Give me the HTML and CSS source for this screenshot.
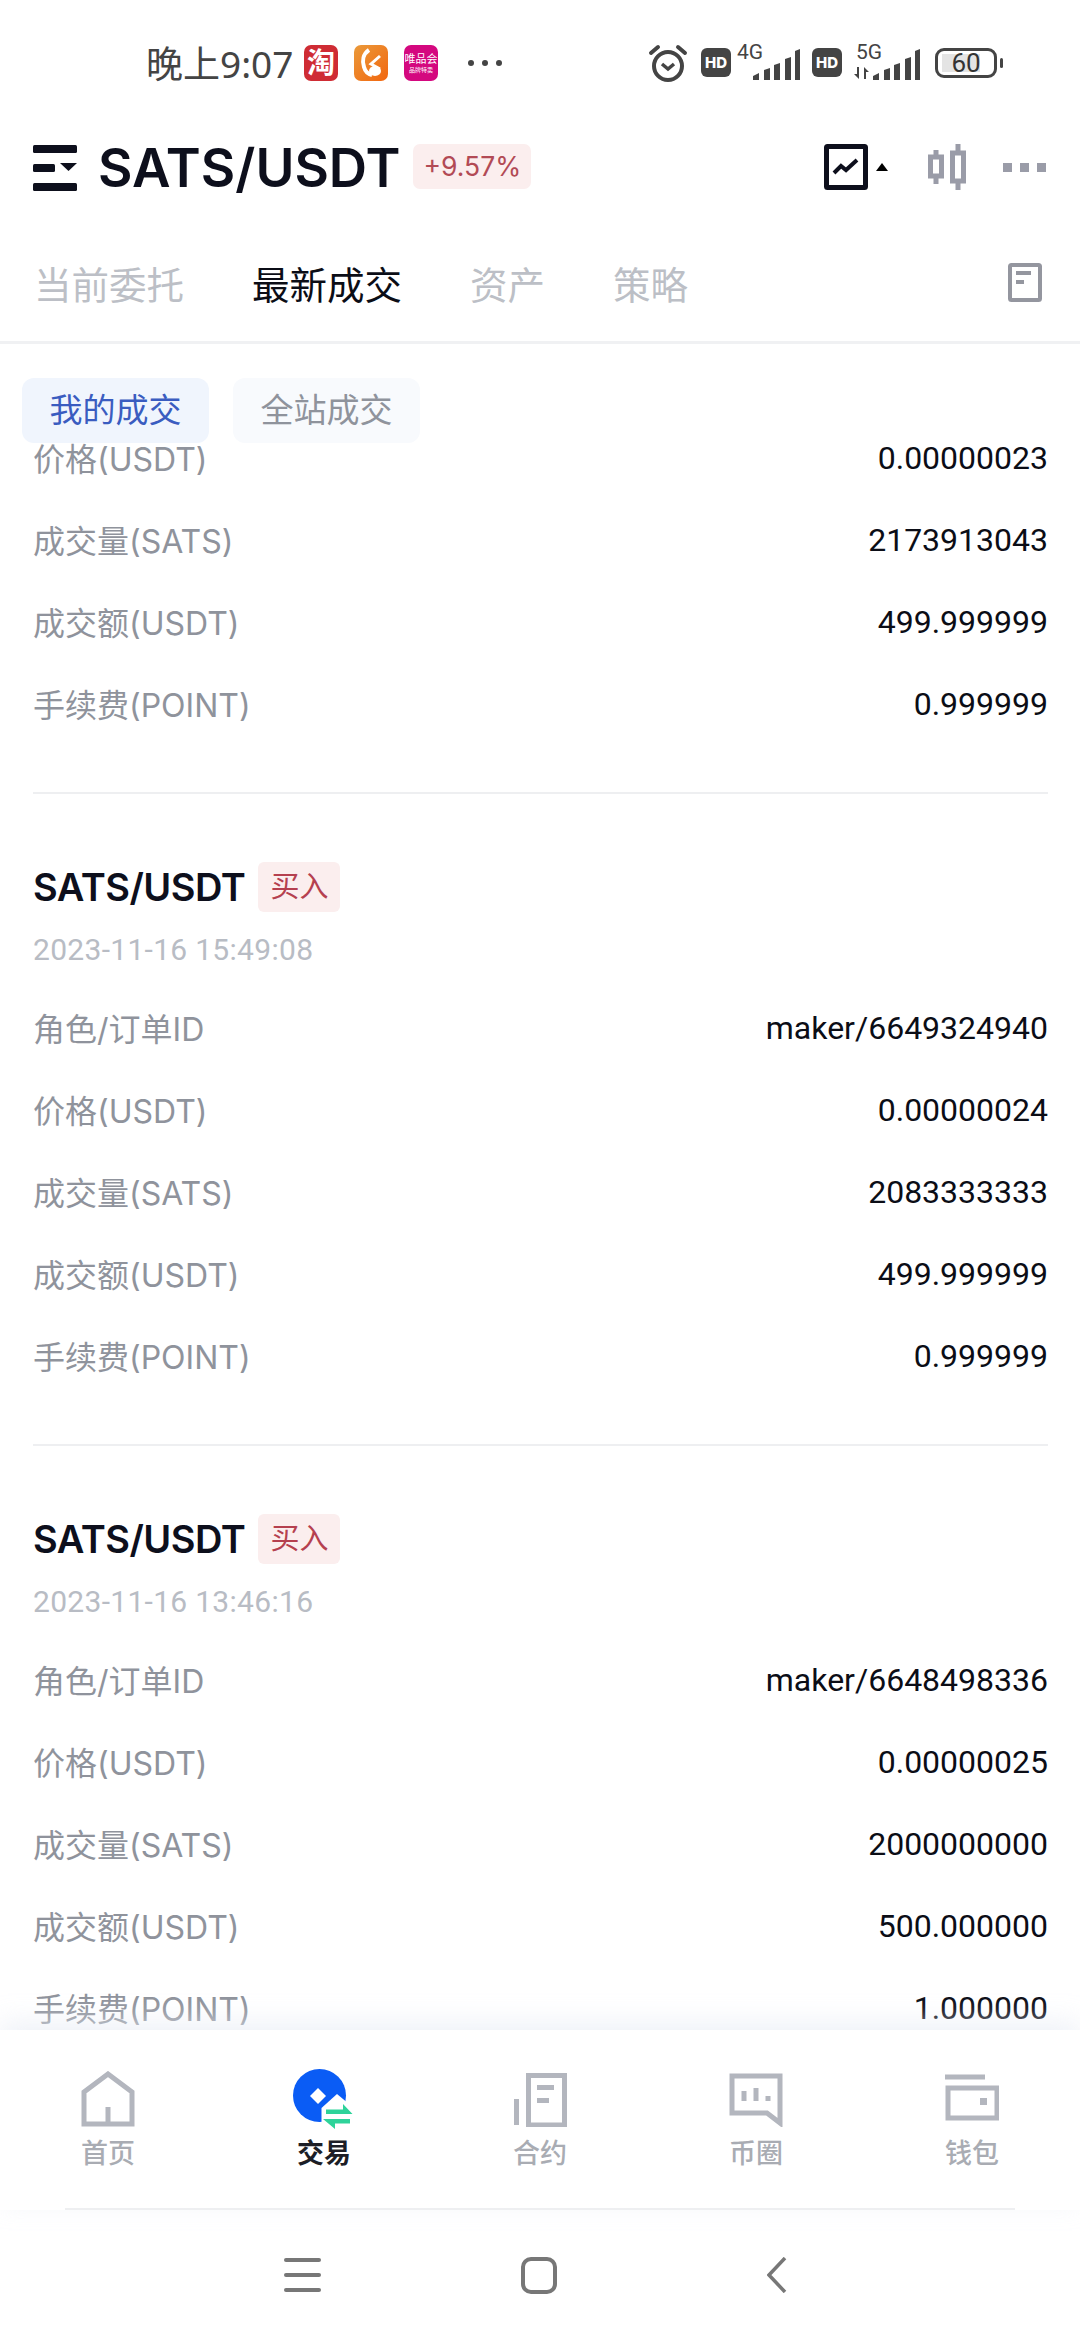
FILE: index.html
```html
<!DOCTYPE html>
<html lang="zh">
<head>
    <meta charset="UTF-8">
    <meta name="viewport" content="width=device-width, initial-scale=1.0">
    <title>SATS/USDT</title>
    <link rel="stylesheet" href="styles.css">
</head>
<body>
<div class="app">
    <!-- barra de estado -->
    <div class="status-bar">
        <div class="status-left">
            <span class="clock">晚上9:07</span>
            <span class="app-icon taobao">淘</span>
            <span class="app-icon squirrel">
                <svg viewBox="0 0 34 36" width="34" height="36"><path d="M15 5C9 9 8 16 10 22c1 4 4 7 8 8" fill="none" stroke="#fff" stroke-width="4"/><path d="M26 11l-9 8 9 5" fill="none" stroke="#fff" stroke-width="3"/><ellipse cx="21" cy="26" rx="6" ry="5" fill="#fff"/></svg>
            </span>
            <span class="app-icon vip"><b>唯品会</b><i>品牌特卖</i></span>
            <span class="status-dots"><i></i><i></i><i></i></span>
        </div>
        <div class="status-right">
            <svg class="alarm" viewBox="0 0 40 38" width="40" height="38">
                <circle cx="20" cy="22" r="14" fill="none" stroke="#444" stroke-width="4"/>
                <path d="M14 20l6 5 6-5" fill="none" stroke="#444" stroke-width="3.5"/>
                <path d="M3 9l7-6 M37 9l-7-6" fill="none" stroke="#444" stroke-width="4" stroke-linecap="round"/>
            </svg>
            <span class="hd">HD</span>
            <span class="net">
                <span class="net-label">4G</span>
                <svg viewBox="0 0 48 32" width="48" height="32"><path d="M1 32v-4l6-3v7z M12 32v-10l6-2v12z M22 32v-15l6-2v17z M33 32v-21l6-2v23z M43 32V3l5-2v31z" fill="#444"/></svg>
            </span>
            <span class="hd hd-second">HD</span>
            <span class="net net-5g">
                <span class="net-label">5G</span>
                <svg class="net-arrows" viewBox="0 0 16 12" width="16" height="12"><path d="M5 0v12L0 7h3V0z M10 12V0l5 5h-3v7z" fill="#444"/></svg>
                <svg viewBox="0 0 48 32" width="48" height="32"><path d="M1 32v-4l6-3v7z M12 32v-10l6-2v12z M22 32v-15l6-2v17z M33 32v-21l6-2v23z M43 32V3l5-2v31z" fill="#444"/></svg>
            </span>
            <span class="battery"><span class="battery-fill"></span><span class="battery-num">60</span></span>
            <span class="battery-nub"></span>
        </div>
    </div>

    <!-- cabecera -->
    <header class="top-bar">
        <svg class="menu-icon" viewBox="0 0 44 46" width="44" height="46">
            <rect width="44" height="8" rx="1.5" fill="#0d0f1c"/>
            <rect y="19" width="22" height="8" rx="1.5" fill="#0d0f1c"/>
            <path d="M27 18h17l-8.5 8z" fill="#0d0f1c"/>
            <rect y="38" width="44" height="8" rx="1.5" fill="#0d0f1c"/>
        </svg>
        <span class="pair">SATS/USDT</span>
        <span class="change">+9.57%</span>
        <div class="top-actions">
            <svg viewBox="0 0 44 46" width="44" height="46">
                <rect x="2.5" y="2.500" width="39" height="41" rx="1" fill="none" stroke="#0d0f1c" stroke-width="5"/>
                <path d="M10 29l7-7 5 4 11-10" fill="none" stroke="#0d0f1c" stroke-width="4"/>
            </svg>
            <span class="caret"></span>
            <svg class="candles" viewBox="0 0 38 46" width="38" height="46">
                <path d="M8 6v34 M30 0v46" stroke="#9a9ca8" stroke-width="5"/>
                <rect x="2.500" y="13" width="11" height="19" fill="#fff" stroke="#9a9ca8" stroke-width="5"/>
                <rect x="24.500" y="9" width="11" height="28" fill="#fff" stroke="#9a9ca8" stroke-width="5"/>
            </svg>
            <span class="more"><i></i><i></i><i></i></span>
        </div>
    </header>

    <!-- pestañas -->
    <nav class="tabs">
        <span class="tab">当前委托</span>
        <span class="tab tab-active">最新成交</span>
        <span class="tab">资产</span>
        <span class="tab">策略</span>
        <svg class="tab-doc" viewBox="0 0 34 39" width="34" height="39">
            <rect x="2" y="2" width="30" height="35" rx="1.500" fill="none" stroke="#94969f" stroke-width="4"/>
            <path d="M8 10h15 M8 19h8" stroke="#94969f" stroke-width="4"/>
        </svg>
    </nav>

    <!-- lista de operaciones -->
    <main class="content">
        <div class="pills">
            <span class="pill pill-active">我的成交</span>
            <span class="pill">全站成交</span>
        </div>
        <div class="list">
            <section class="trade">
                <div class="row"><span class="label">价格(USDT)</span><span class="value">0.00000023</span></div>
                <div class="row"><span class="label">成交量(SATS)</span><span class="value">2173913043</span></div>
                <div class="row"><span class="label">成交额(USDT)</span><span class="value">499.999999</span></div>
                <div class="row"><span class="label">手续费(POINT)</span><span class="value">0.999999</span></div>
            </section>
            <section class="trade">
                <div class="trade-head"><span class="trade-pair">SATS/USDT</span><span class="tag">买入</span></div>
                <div class="trade-date">2023-11-16 15:49:08</div>
                <div class="row"><span class="label">角色/订单ID</span><span class="value">maker/6649324940</span></div>
                <div class="row"><span class="label">价格(USDT)</span><span class="value">0.00000024</span></div>
                <div class="row"><span class="label">成交量(SATS)</span><span class="value">2083333333</span></div>
                <div class="row"><span class="label">成交额(USDT)</span><span class="value">499.999999</span></div>
                <div class="row"><span class="label">手续费(POINT)</span><span class="value">0.999999</span></div>
            </section>
            <section class="trade">
                <div class="trade-head"><span class="trade-pair">SATS/USDT</span><span class="tag">买入</span></div>
                <div class="trade-date">2023-11-16 13:46:16</div>
                <div class="row"><span class="label">角色/订单ID</span><span class="value">maker/6648498336</span></div>
                <div class="row"><span class="label">价格(USDT)</span><span class="value">0.00000025</span></div>
                <div class="row"><span class="label">成交量(SATS)</span><span class="value">2000000000</span></div>
                <div class="row"><span class="label">成交额(USDT)</span><span class="value">500.000000</span></div>
                <div class="row"><span class="label">手续费(POINT)</span><span class="value">1.000000</span></div>
            </section>
        </div>
    </main>

    <!-- navegación inferior -->
    <footer class="bottom-nav">
        <div class="nav-item">
            <svg viewBox="0 0 54 56" width="54" height="56"><path d="M3 53V21L27 3l24 18v32z M27 53V36" fill="none" stroke="#b3b6be" stroke-width="5"/></svg>
            <span>首页</span>
        </div>
        <div class="nav-item nav-active">
            <svg viewBox="0 0 62 60" width="62" height="60">
                <circle cx="26.500" cy="26.500" r="26.500" fill="#0a5cf5"/>
                <path d="M25 19l8 8-8 8-8-8z" fill="#fff"/>
                <path d="M28.500 39L44 25l18 15v20H28.500z" fill="#fff"/>
                <path d="M33 40.500h17V35l9.500 10H33z M30 50h27v4.500H42V60z" fill="#2ed39a"/>
            </svg>
            <span>交易</span>
        </div>
        <div class="nav-item">
            <svg viewBox="0 0 54 56" width="54" height="56"><path d="M15.500 54V4.500h36V54z M3.500 54V28" fill="none" stroke="#b3b6be" stroke-width="5"/><path d="M24 16.500h17 M24 29.500h12" stroke="#b3b6be" stroke-width="5"/></svg>
            <span>合约</span>
        </div>
        <div class="nav-item">
            <svg viewBox="0 0 54 56" width="54" height="56"><path d="M3 5h48v47L38 42H3z" fill="none" stroke="#b3b6be" stroke-width="5"/><path d="M15 20v10 M27 17v13 M39 25v5" stroke="#b3b6be" stroke-width="5"/></svg>
            <span>币圈</span>
        </div>
        <div class="nav-item">
            <svg viewBox="0 0 54 56" width="54" height="56"><path d="M0 6h40" stroke="#b3b6be" stroke-width="5"/><path d="M3 17h49v30H3z" fill="none" stroke="#b3b6be" stroke-width="5"/><rect x="35" y="27" width="7" height="7" fill="#b3b6be"/></svg>
            <span>钱包</span>
        </div>
    </footer>

    <!-- botones del sistema -->
    <div class="system-nav">
        <span class="sys-menu"><i></i><i></i><i></i></span>
        <span class="sys-home"></span>
        <svg class="sys-back" viewBox="0 0 20 36" width="20" height="36"><path d="M18 1L2 18l16 17" fill="none" stroke="#777" stroke-width="3.500"/></svg>
    </div>
</div>
</body>
</html>
```

FILE: styles.css
```css
* {
    box-sizing: border-box;
}

body {
    margin: 0;
    background: #fff;
    font-family: 'Inter', 'Noto Sans CJK SC', sans-serif;
}

.app {
    width: 1080px;
    height: 2340px;
    display: flex;
    flex-direction: column;
    overflow: hidden;
    background: #fff;
}

/* barra de estado */
.status-bar {
    height: 125px;
    flex: none;
    display: flex;
    justify-content: space-between;
    align-items: center;
    padding: 0 77px 0 146px;
    color: #444;
}

.status-left,
.status-right {
    display: flex;
    align-items: center;
}

.clock {
    font-size: 37px;
    width: 158px;
    margin-top: -2px;
    white-space: nowrap;
    font-family: 'Noto Sans', 'Noto Sans CJK SC', sans-serif;
}

.app-icon {
    width: 34px;
    height: 36px;
    border-radius: 7px;
    margin-right: 16px;
    display: flex;
    flex-direction: column;
    align-items: center;
    justify-content: center;
    color: #fff;
}

.taobao {
    background: #cf2c34;
    font-size: 28px;
    line-height: 36px;
    font-weight: 700;
}

.squirrel {
    background: linear-gradient(135deg, #ea9a3a, #f2660f);
}

.vip {
    background: #d4087f;
    margin-right: 30px;
}

.vip b {
    font-size: 11px;
    font-weight: 400;
    line-height: 14px;
    white-space: nowrap;
}

.vip i {
    font-size: 6px;
    font-style: normal;
    line-height: 8px;
    white-space: nowrap;
}

.status-dots,
.more {
    display: flex;
}

.status-dots {
    gap: 8px;
}

.status-dots i {
    width: 6px;
    height: 6px;
    border-radius: 50%;
    background: #444;
}

.hd {
    width: 30px;
    height: 29px;
    margin-left: 13px;
    border-radius: 6px;
    background: #444;
    color: #fff;
    font-size: 15px;
    font-weight: 800;
    line-height: 29px;
    text-align: center;
}

.hd-second {
    margin-left: 12px;
}

.net {
    position: relative;
    display: flex;
    align-items: flex-end;
    justify-content: flex-end;
    width: 69px;
    height: 34px;
}

.net-5g {
    width: 78px;
}

.net svg {
    display: block;
}

.net-label {
    position: absolute;
    top: -5px;
    left: 6px;
    font-size: 21px;
    line-height: 22px;
    font-family: 'Roboto', sans-serif;
}

.net-5g .net-label {
    left: 14px;
}

.net-arrows {
    position: absolute;
    left: 12px;
    bottom: 1px;
}

.battery {
    position: relative;
    width: 62px;
    height: 30px;
    margin-left: 15px;
    border: 3px solid #444;
    border-radius: 9px;
    display: flex;
    align-items: center;
    justify-content: center;
}

.battery-fill {
    position: absolute;
    left: 4px;
    top: 3px;
    bottom: 3px;
    width: 38px;
    background: #e4e4e4;
}

.battery-num {
    position: relative;
    font-size: 26px;
    font-family: 'Roboto', sans-serif;
    color: #333;
}

.battery-nub {
    width: 3px;
    height: 10px;
    margin-left: 3px;
    border-radius: 2px;
    background: #444;
}

/* cabecera */
.top-bar {
    height: 86px;
    flex: none;
    display: flex;
    align-items: center;
    padding: 0 34px 0 33px;
}

.menu-icon {
    margin-right: 21px;
}

.pair {
    font-size: 53px;
    font-weight: 600;
    color: #0d0f1c;
}

.change {
    height: 45px;
    margin: -3px 0 0 13px;
    padding: 0 10px;
    border-radius: 7px;
    background: #fbeeee;
    color: #b24a55;
    font-size: 26.5px;
    line-height: 45px;
}

.top-actions {
    margin-left: auto;
    margin-top: -2px;
    display: flex;
    align-items: center;
}

.caret {
    width: 0;
    height: 0;
    margin: 0 0 0 8px;
    border-left: 6px solid transparent;
    border-right: 6px solid transparent;
    border-bottom: 8px solid #000;
}

.candles {
    margin-left: 40px;
}

.more {
    gap: 8px;
    margin-left: 37px;
}

.more i {
    width: 9px;
    height: 9px;
    background: #9a9ca8;
}

/* pestañas */
.tabs {
    height: 133px;
    flex: none;
    display: flex;
    align-items: center;
    gap: 68px;
    padding: 12px 38px 0 34px;
    border-bottom: 3px solid #f0f1f3;
    font-size: 37.5px;
    color: #bcbfc6;
}

.tab-active {
    color: #0b0d16;
}

.tab-doc {
    margin-left: auto;
}

/* lista */
.content {
    position: relative;
    flex: 1;
    overflow: hidden;
}

.pills {
    position: absolute;
    top: 34px;
    left: 22px;
    display: flex;
    gap: 24px;
}

.pill {
    width: 187px;
    height: 65px;
    border-radius: 12px;
    background: #f8fafd;
    color: #8f939c;
    font-size: 33px;
    line-height: 65px;
    text-align: center;
}

.pill-active {
    background: #f0f5fd;
    color: #3a5cc0;
}

.list {
    padding: 72px 32px 0 33px;
}

.trade {
    padding-bottom: 48px;
    margin-bottom: 68px;
    border-bottom: 2px solid #eeeff1;
}

.row {
    display: flex;
    justify-content: space-between;
    align-items: center;
    height: 82px;
}

.label {
    font-size: 32px;
    color: #8f939c;
}

.value {
    padding-top: 2px;
    font-size: 32px;
    color: #0b0d16;
    font-family: 'Roboto', sans-serif;
}

.trade-head {
    display: flex;
    align-items: center;
    height: 50px;
}

.trade-pair {
    font-size: 38px;
    font-weight: 600;
    letter-spacing: -0.5px;
    color: #0d0f1c;
}

.tag {
    height: 50px;
    margin-left: 13px;
    padding: 0 12px;
    border-radius: 6px;
    background: #fbeeee;
    color: #b5404f;
    font-size: 29px;
    line-height: 50px;
}

.trade-date {
    height: 46px;
    margin-top: 15px;
    margin-bottom: 13px;
    font-family: 'Roboto', sans-serif;
    font-size: 30px;
    letter-spacing: 0.3px;
    line-height: 46px;
    color: #b8bcc4;
}

/* navegación inferior */
.bottom-nav {
    height: 180px;
    flex: none;
    display: flex;
    justify-content: space-around;
    padding: 41px 0 0;
    position: relative;
    background: #fff;
    box-shadow: 0 -8px 24px rgba(232, 236, 245, 0.7);
}

.bottom-nav::after {
    content: '';
    position: absolute;
    left: 65px;
    right: 65px;
    bottom: 0;
    height: 2px;
    background: #eeeff1;
}

.nav-item {
    width: 216px;
    display: flex;
    flex-direction: column;
    align-items: center;
    color: #a9acb3;
    font-size: 27px;
    font-weight: 500;
}

.nav-item span {
    margin-top: 5px;
}

.nav-active {
    color: #1c1e26;
    font-weight: 700;
}

.nav-active svg {
    margin: -2px 0 -2px;
}

/* botones del sistema */
.system-nav {
    height: 130px;
    flex: none;
    display: flex;
    align-items: center;
    padding-left: 284px;
    gap: 200px;
}

.sys-menu {
    width: 37px;
    display: flex;
    flex-direction: column;
    gap: 11px;
}

.sys-menu i {
    height: 4px;
    border-radius: 2px;
    background: #777;
}

.sys-home {
    width: 36px;
    height: 37px;
    border: 4px solid #777;
    border-radius: 10px;
}

.sys-back {
    margin-left: 10px;
}
```
